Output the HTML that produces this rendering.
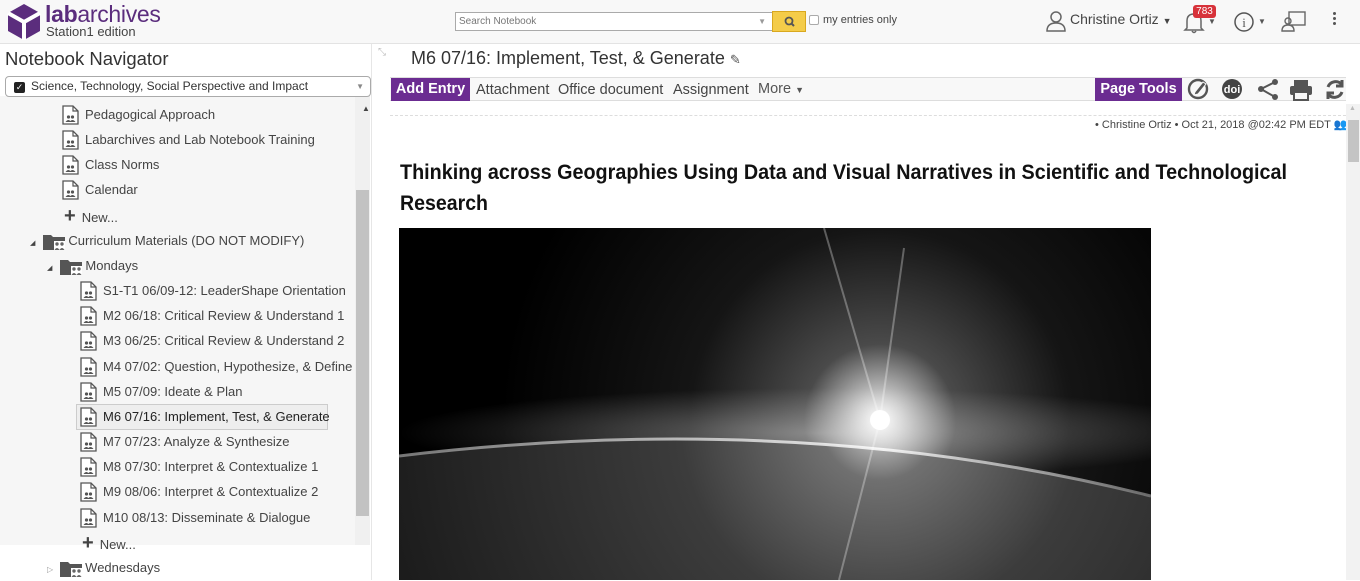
<!DOCTYPE html>
<html><head><meta charset="utf-8"><style>
*{margin:0;padding:0;box-sizing:border-box}
body{width:1360px;height:580px;overflow:hidden;font-family:"Liberation Sans",Arial,sans-serif;background:#fff;position:relative;color:#333}
.abs{position:absolute}
#hdr{left:0;top:0;width:1360px;height:44px;background:#f8f8f8;border-bottom:1px solid #e3e3e3}
#left{left:0;top:44px;width:372px;height:536px;background:#fff;border-right:1px solid #e6e6e6}
.tree{left:0;top:96px;width:356px;height:449px;background:#f6f6f6}
.row{position:absolute;font-size:13px;color:#444;white-space:nowrap;height:22px;line-height:22px}
.doc{display:inline-block;width:17px;height:20px;vertical-align:middle;margin-right:6px;position:relative;top:-1px}
.tb{font-size:14.5px;color:#444}
</style></head><body>
<div id="hdr" class="abs">
  <svg class="abs" style="left:7px;top:3px" width="34" height="38" viewBox="0 0 34 38">
    <path d="M17 1 L33 10 L33 28 L17 37 L1 28 L1 10 Z" fill="#5b2d7d"/>
    <path d="M17 19 L17 37 M17 19 L1 10 M17 19 L33 10" stroke="#fff" stroke-width="4" fill="none"/>
  </svg>
  <div class="abs" style="left:45px;top:1px;font-size:23px;color:#5b2d7d;letter-spacing:-0.3px"><b>lab</b>archives</div>
  <div class="abs" style="left:46px;top:24px;font-size:13px;color:#444">Station1 edition</div>
  <div class="abs" style="left:455px;top:12px;width:318px;height:19px;border:1px solid #aaa;background:#fff;font-size:10px;color:#777;padding:3px 3px;line-height:12px">Search Notebook<span class="abs" style="right:6px;top:3px;font-size:8px;color:#999">▼</span></div>
  <div class="abs" style="left:772px;top:11px;width:34px;height:21px;background:#f4cc49;border:1px solid #d9a81f"><svg width="34" height="21"><circle cx="16" cy="9" r="3.5" stroke="#555" stroke-width="1.8" fill="none"/><path d="M18.5 11.5 L21 14" stroke="#555" stroke-width="2"/></svg></div>
  <div class="abs" style="left:809px;top:15px;width:10px;height:10px;border:1px solid #aaa;border-radius:2px;background:#fff"></div>
  <div class="abs" style="left:823px;top:14px;font-size:11px;color:#444">my entries only</div>
  <svg class="abs" style="left:1045px;top:10px" width="22" height="22" viewBox="0 0 22 22"><circle cx="11" cy="7" r="5" stroke="#666" stroke-width="1.5" fill="none"/><path d="M2 21 Q2 13 11 13 Q20 13 20 21 Z" stroke="#666" stroke-width="1.5" fill="none"/></svg>
  <div class="abs" style="left:1070px;top:11px;font-size:14px;color:#444">Christine Ortiz <span style="font-size:9px">▼</span></div>
  <svg class="abs" style="left:1183px;top:10px" width="22" height="24" viewBox="0 0 22 24"><path d="M4 18 L4 11 Q4 4 11 4 Q18 4 18 11 L18 18 L20 20 L2 20 Z" stroke="#666" stroke-width="1.5" fill="none"/><path d="M9 21 Q11 24 13 21" stroke="#666" stroke-width="1.5" fill="none"/></svg>
  <div class="abs" style="left:1193px;top:5px;width:23px;height:13px;background:#d7323a;border-radius:3px;color:#fff;font-size:10px;text-align:center;line-height:13px">783</div>
  <div class="abs" style="left:1208px;top:17px;font-size:8px;color:#555">▼</div>
  <svg class="abs" style="left:1233px;top:11px" width="22" height="22"><circle cx="11" cy="11" r="9" stroke="#555" stroke-width="1.5" fill="none"/><text x="11" y="16" font-size="13" text-anchor="middle" fill="#555" font-family="Liberation Serif">i</text></svg>
  <div class="abs" style="left:1258px;top:17px;font-size:8px;color:#555">▼</div>
  <svg class="abs" style="left:1281px;top:9px" width="26" height="24"><rect x="8" y="3" width="16" height="13" stroke="#666" stroke-width="1.4" fill="none"/><circle cx="7" cy="12" r="3" stroke="#666" stroke-width="1.4" fill="none"/><path d="M1 22 Q1 16 7 16 Q13 16 13 22 Z" stroke="#666" stroke-width="1.4" fill="#f8f8f8"/></svg>
  <div class="abs" style="left:1333px;top:12px;width:3px"><div style="width:3px;height:3px;background:#555;border-radius:2px;margin-bottom:2px"></div><div style="width:3px;height:3px;background:#555;border-radius:2px;margin-bottom:2px"></div><div style="width:3px;height:3px;background:#555;border-radius:2px"></div></div>
</div>

<div id="left" class="abs"></div>
<div class="abs" style="left:5px;top:48px;font-size:18.5px;color:#333">Notebook Navigator</div>
<div class="abs tree"></div>
<div class="abs" style="left:355px;top:96px;width:15px;height:449px;background:#f0f0f0"></div>
<div class="abs" style="left:356px;top:190px;width:13px;height:326px;background:#c2c2c2"></div>
<div class="abs" style="left:362px;top:104px;font-size:8px;color:#444">▲</div>
<div class="abs" style="left:5px;top:76px;width:366px;height:21px;border:1px solid #aaa;border-radius:4px;background:#fff;font-size:12px;color:#333;line-height:19px;padding-left:25px">Science, Technology, Social Perspective and Impact<span class="abs" style="left:8px;top:5px;width:11px;height:11px;background:#222;border-radius:2px;color:#fff;font-size:9px;line-height:11px;text-align:center">✓</span><span class="abs" style="right:6px;top:0;font-size:8px;color:#888">▼</span></div>

<svg width="0" height="0" style="position:absolute"><defs>
<symbol id="doc" viewBox="0 0 17 20"><path d="M1 1 L11 1 L16 6 L16 19 L1 19 Z" fill="#fff" stroke="#555" stroke-width="1.3"/><path d="M11 1 L11 6 L16 6" fill="none" stroke="#555" stroke-width="1.2"/><circle cx="6.5" cy="12" r="1.6" fill="#555"/><circle cx="10.5" cy="12" r="1.6" fill="#555"/><path d="M3.5 17 Q6.5 13 9 17 Z M7.5 17 Q10.5 13 13.5 17 Z" fill="#555"/></symbol>
<symbol id="fold" viewBox="0 0 24 20"><path d="M1 3 L9 3 L11 5 L23 5 L23 18 L1 18 Z" fill="#555"/><rect x="12" y="9" width="11" height="9" fill="#fff"/><circle cx="15" cy="12" r="1.7" fill="#666"/><circle cx="20" cy="12" r="1.7" fill="#666"/><path d="M12.5 18 Q15 14 17.5 18 Z M17.5 18 Q20 14 22.5 18 Z" fill="#666"/></symbol>
</defs></svg>

<div class="row" style="left:62px;top:104px"><svg class="doc"><use href="#doc"/></svg>Pedagogical Approach</div>
<div class="row" style="left:62px;top:129px"><svg class="doc"><use href="#doc"/></svg>Labarchives and Lab Notebook Training</div>
<div class="row" style="left:62px;top:154px"><svg class="doc"><use href="#doc"/></svg>Class Norms</div>
<div class="row" style="left:62px;top:179px"><svg class="doc"><use href="#doc"/></svg>Calendar</div>
<div class="row" style="left:64px;top:205px"><b style="font-size:20px;color:#444;margin-right:6px">+</b>New...</div>
<div class="row" style="left:30px;top:230px"><span style="font-size:7px;color:#444;margin-right:7px">◢</span><svg style="width:24px;height:20px;vertical-align:middle;margin-right:2px"><use href="#fold"/></svg>Curriculum Materials (DO NOT MODIFY)</div>
<div class="row" style="left:47px;top:255px"><span style="font-size:7px;color:#444;margin-right:7px">◢</span><svg style="width:24px;height:20px;vertical-align:middle;margin-right:2px"><use href="#fold"/></svg>Mondays</div>
<div class="row" style="left:80px;top:280px"><svg class="doc"><use href="#doc"/></svg>S1-T1 06/09-12: LeaderShape Orientation</div>
<div class="row" style="left:80px;top:305px"><svg class="doc"><use href="#doc"/></svg>M2 06/18: Critical Review &amp; Understand 1</div>
<div class="row" style="left:80px;top:330px"><svg class="doc"><use href="#doc"/></svg>M3 06/25: Critical Review &amp; Understand 2</div>
<div class="row" style="left:80px;top:356px"><svg class="doc"><use href="#doc"/></svg>M4 07/02: Question, Hypothesize, &amp; Define</div>
<div class="row" style="left:80px;top:381px"><svg class="doc"><use href="#doc"/></svg>M5 07/09: Ideate &amp; Plan</div>
<div class="abs" style="left:76px;top:404px;width:252px;height:26px;border:1px solid #ccc;background:#eeeeee"></div>
<div class="row" style="left:80px;top:406px;color:#222"><svg class="doc"><use href="#doc"/></svg>M6 07/16: Implement, Test, &amp; Generate</div>
<div class="row" style="left:80px;top:431px"><svg class="doc"><use href="#doc"/></svg>M7 07/23: Analyze &amp; Synthesize</div>
<div class="row" style="left:80px;top:456px"><svg class="doc"><use href="#doc"/></svg>M8 07/30: Interpret &amp; Contextualize 1</div>
<div class="row" style="left:80px;top:481px"><svg class="doc"><use href="#doc"/></svg>M9 08/06: Interpret &amp; Contextualize 2</div>
<div class="row" style="left:80px;top:507px"><svg class="doc"><use href="#doc"/></svg>M10 08/13: Disseminate &amp; Dialogue</div>
<div class="row" style="left:82px;top:532px"><b style="font-size:20px;color:#444;margin-right:6px">+</b>New...</div>
<div class="row" style="left:47px;top:557px"><span style="font-size:8px;color:#999;margin-right:6px">▷</span><svg style="width:24px;height:20px;vertical-align:middle;margin-right:2px"><use href="#fold"/></svg>Wednesdays</div>

<div class="abs" style="left:378px;top:47px;font-size:10px;color:#bbb">⤡</div>
<div class="abs" style="left:411px;top:48px;font-size:18px;color:#333">M6 07/16: Implement, Test, &amp; Generate <span style="font-size:13px;color:#555">✎</span></div>

<div class="abs" style="left:390px;top:77px;width:956px;height:24px;background:#f8f8f8;border-top:1px solid #ddd;border-bottom:1px solid #ddd"></div>
<div class="abs" style="left:391px;top:78px;width:79px;height:23px;background:#6b2c91;color:#fff;font-weight:bold;font-size:14.5px;line-height:23px;text-align:center">Add Entry</div>
<div class="abs tb" style="left:476px;top:82px">Attachment</div>
<div class="abs tb" style="left:558px;top:82px">Office document</div>
<div class="abs tb" style="left:673px;top:82px">Assignment</div>
<div class="abs tb" style="left:758px;top:81px;color:#555">More <span style="font-size:9px">▼</span></div>
<div class="abs" style="left:1095px;top:78px;width:87px;height:23px;background:#6b2c91;color:#fff;font-weight:bold;font-size:14.5px;line-height:23px;text-align:center">Page Tools</div>
<svg class="abs" style="left:1186px;top:78px" width="160" height="24">
  <circle cx="12" cy="11" r="9" stroke="#555" stroke-width="2.4" fill="none"/><path d="M9 14 L17 4 L20 6 L12 16 L8 17 Z" fill="#555" stroke="#f8f8f8" stroke-width="1"/>
  <circle cx="46" cy="11" r="10" fill="#444"/><text x="46" y="15" font-size="11" font-weight="bold" fill="#fff" text-anchor="middle" font-family="Liberation Sans">doi</text>
  <circle cx="89" cy="4" r="3" fill="#555"/><circle cx="89" cy="19" r="3" fill="#555"/><circle cx="75" cy="11" r="3" fill="#555"/><path d="M89 4 L75 11 L89 19" stroke="#555" stroke-width="2" fill="none"/>
  <rect x="108" y="2" width="14" height="6" fill="#555"/><rect x="104" y="8" width="22" height="9" rx="2" fill="#555"/><rect x="108" y="14" width="14" height="8" fill="#f8f8f8" stroke="#555" stroke-width="2"/>
  <path d="M142 9 A8 8 0 0 1 156 7 M156 2 L156 8 L150 8" stroke="#555" stroke-width="3" fill="none"/><path d="M156 14 A8 8 0 0 1 142 16 M142 21 L142 15 L148 15" stroke="#555" stroke-width="3" fill="none"/>
</svg>

<div class="abs" style="left:390px;top:115px;width:956px;border-top:1px dashed #ddd"></div>
<div class="abs" style="left:1095px;top:118px;font-size:11px;color:#444">• Christine Ortiz • Oct 21, 2018 @02:42 PM EDT <span style="font-size:11px">👥</span></div>
<div class="abs" style="left:1346px;top:104px;width:14px;height:476px;background:#f2f2f2"></div>
<div class="abs" style="left:1348px;top:120px;width:11px;height:42px;background:#c4c4c4"></div>
<div class="abs" style="left:1349px;top:105px;font-size:7px;color:#bbb">▲</div>

<svg class="abs" style="left:399px;top:157px" width="900" height="60"><text x="1" y="22" font-size="21" font-weight="bold" fill="#111" font-family="Liberation Sans" textLength="887" lengthAdjust="spacingAndGlyphs">Thinking across Geographies Using Data and Visual Narratives in Scientific and Technological</text><text x="1" y="53" font-size="21" font-weight="bold" fill="#111" font-family="Liberation Sans" textLength="88" lengthAdjust="spacingAndGlyphs">Research</text></svg>

<svg class="abs" style="left:399px;top:228px" width="752" height="352" viewBox="0 0 752 352">
  <defs>
    <radialGradient id="g1" cx="481" cy="192" r="380" gradientUnits="userSpaceOnUse"><stop offset="0" stop-color="#fff"/><stop offset="0.06" stop-color="#ccc"/><stop offset="0.2" stop-color="#4a4a4a"/><stop offset="0.5" stop-color="#151515"/><stop offset="1" stop-color="#000"/></radialGradient>
    <radialGradient id="g2" cx="481" cy="192" r="500" gradientUnits="userSpaceOnUse"><stop offset="0" stop-color="#ddd"/><stop offset="0.12" stop-color="#707070"/><stop offset="0.4" stop-color="#3c3c3c"/><stop offset="1" stop-color="#1c1c1c"/></radialGradient>
    <linearGradient id="rim" x1="0" y1="0" x2="1" y2="0"><stop offset="0" stop-color="#888"/><stop offset="0.64" stop-color="#fff"/><stop offset="1" stop-color="#777"/></linearGradient>
    <radialGradient id="haze" cx="0.5" cy="0.5" r="0.5"><stop offset="0" stop-color="#fff" stop-opacity="0.35"/><stop offset="1" stop-color="#fff" stop-opacity="0"/></radialGradient>
  </defs>
  <rect width="752" height="352" fill="#000"/>
  <rect width="752" height="352" fill="url(#g1)"/>
  <ellipse cx="420" cy="205" rx="420" ry="45" fill="url(#haze)"/>
  <path d="M0 228 Q400 180 752 268 L752 352 L0 352 Z" fill="url(#g2)"/>
  <path d="M0 228 Q400 180 752 268" stroke="url(#rim)" stroke-width="3" fill="none" opacity="0.85"/>
  <path d="M481 192 L425 0 M481 192 L505 20 M481 192 L440 352" stroke="#fff" stroke-width="2" opacity="0.3"/>
  <circle cx="481" cy="192" r="10" fill="#fff"/>
</svg>
</body></html>
